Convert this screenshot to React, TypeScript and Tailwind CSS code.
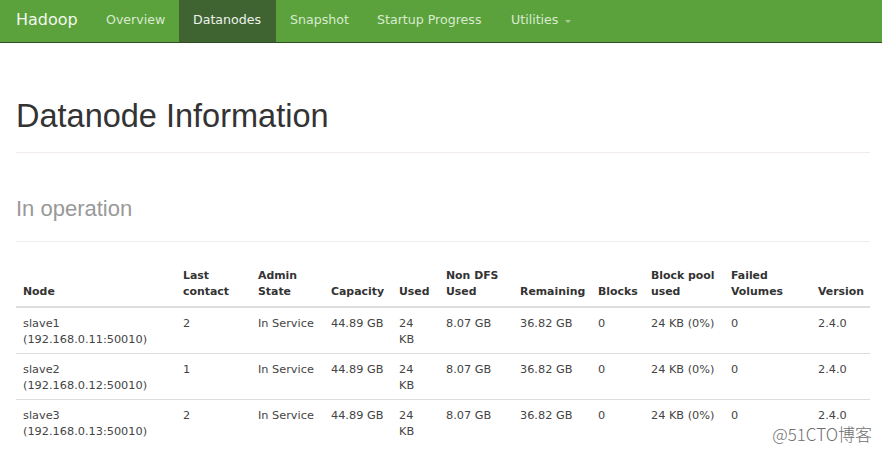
const navItems = [
  { label: 'Overview', w: 'w-[87px]' },
  { label: 'Datanodes', w: 'w-[97px]', active: true },
  { label: 'Snapshot', w: 'w-[87px]' },
  { label: 'Startup Progress', w: 'w-[134px]' },
];

const columns = [
  { title: 'Node', w: 'w-[160px]' },
  { title: 'Last contact', w: 'w-[75px]' },
  { title: 'Admin State', w: 'w-[73px]' },
  { title: 'Capacity', w: 'w-[68px]' },
  { title: 'Used', w: 'w-[47px]' },
  { title: 'Non DFS Used', w: 'w-[74px]' },
  { title: 'Remaining', w: 'w-[78px]' },
  { title: 'Blocks', w: 'w-[53px]' },
  { title: 'Block pool used', w: 'w-[80px]' },
  { title: 'Failed Volumes', w: 'w-[87px]' },
  { title: 'Version', w: 'w-[59px]' },
];

const headerLines: Record<string, string[]> = {
  'Last contact': ['Last', 'contact'],
  'Admin State': ['Admin', 'State'],
  'Non DFS Used': ['Non DFS', 'Used'],
  'Block pool used': ['Block pool', 'used'],
  'Failed Volumes': ['Failed', 'Volumes'],
};

const nodes = [
  { name: 'slave1', addr: '192.168.0.11:50010', contact: '2' },
  { name: 'slave2', addr: '192.168.0.12:50010', contact: '1' },
  { name: 'slave3', addr: '192.168.0.13:50010', contact: '2' },
];

export default function App() {
  return (
    <div className="relative min-h-[450px] bg-white text-[#333]">
      <nav className="flex h-[43px] border-b border-[#2f4d24] bg-[#5ba23c] font-['DejaVu_Sans',sans-serif]">
        <div className="flex w-[92px] items-center pl-4 pb-[2px] text-[16px] text-[#f2f7ef]">Hadoop</div>
        {navItems.map((item) => (
          <div
            key={item.label}
            className={
              item.active
                ? `${item.w} flex items-center pl-[14px] pb-[2px] text-[12.6px] text-[#eef2ec] bg-[#3f6432]`
                : `${item.w} flex items-center pl-[14px] pb-[2px] text-[12.6px] text-[#d9ead0]`
            }
          >
            {item.label}
          </div>
        ))}
        <div className="flex items-center gap-[7px] pl-[14px] pb-[2px] text-[12.6px] text-[#d9ead0]">
          Utilities
          <span className="mt-[2px] h-0 w-0 border-x-[3px] border-t-[3px] border-x-transparent border-t-[#a9c99a]" />
        </div>
      </nav>

      <main className="pl-4 pr-3">
        <div className="mt-[56px] border-b border-[#f3ecec] pb-[17px]">
          <h1 className="font-['Liberation_Sans',Arial,sans-serif] text-[32.5px] leading-[1.1] text-[#333]">
            Datanode Information
          </h1>
        </div>

        <div className="mt-[44px] border-b border-[#eeeeee] pb-[20px]">
          <h2 className="font-['Liberation_Sans',Arial,sans-serif] text-[22px] leading-[1.1] text-[#999]">
            In operation
          </h2>
        </div>

        <table className="mt-[19px] w-full table-fixed border-collapse font-['DejaVu_Sans',sans-serif] text-[11.3px] leading-[16px]">
          <thead>
            <tr>
              {columns.map((c) => (
                <th
                  key={c.title}
                  className={`${c.w} border-b-2 border-[#dddddd] px-[7px] pt-[7px] pb-[6px] text-left align-bottom text-[10.9px] font-bold text-[#333]`}
                >
                  {(headerLines[c.title] ?? [c.title]).map((l) => (
                    <div key={l} className="whitespace-nowrap">{l}</div>
                  ))}
                </th>
              ))}
            </tr>
          </thead>
          <tbody className="text-[#444]">
            {nodes.map((n) => (
              <tr key={n.name} className="border-b border-[#dddddd] last:border-b-0">
                <td className="px-[7px] pt-[8px] pb-[5px] align-top">
                  <div>{n.name}</div>
                  <div>({n.addr})</div>
                </td>
                <td className="px-[7px] pt-[8px] pb-[5px] align-top">{n.contact}</td>
                <td className="px-[7px] pt-[8px] pb-[5px] align-top whitespace-nowrap">In Service</td>
                <td className="px-[7px] pt-[8px] pb-[5px] align-top whitespace-nowrap">44.89 GB</td>
                <td className="px-[7px] pt-[8px] pb-[5px] align-top">
                  <div>24</div>
                  <div>KB</div>
                </td>
                <td className="px-[7px] pt-[8px] pb-[5px] align-top whitespace-nowrap">8.07 GB</td>
                <td className="px-[7px] pt-[8px] pb-[5px] align-top whitespace-nowrap">36.82 GB</td>
                <td className="px-[7px] pt-[8px] pb-[5px] align-top">0</td>
                <td className="px-[7px] pt-[8px] pb-[5px] align-top whitespace-nowrap">24 KB (0%)</td>
                <td className="px-[7px] pt-[8px] pb-[5px] align-top">0</td>
                <td className="px-[7px] pt-[8px] pb-[5px] align-top">2.4.0</td>
              </tr>
            ))}
          </tbody>
        </table>
      </main>

      <div className="absolute right-[10px] top-[422px] font-['Noto_Sans_CJK_SC',sans-serif] text-[17px] font-light leading-[24px] text-[#707070] [text-shadow:0_0_2px_#fff]">
        @51CTO博客
      </div>
    </div>
  );
}
